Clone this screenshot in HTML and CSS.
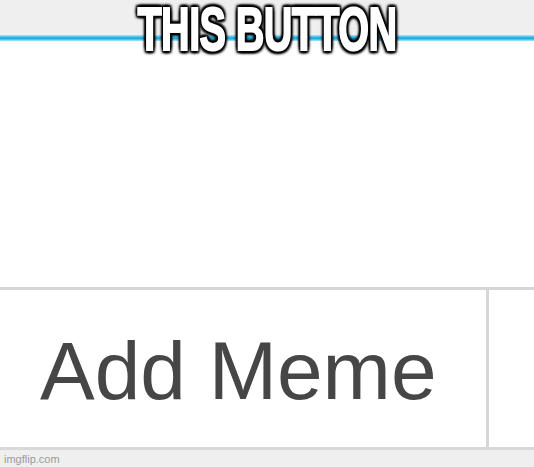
FILE: index.html
```html
<!DOCTYPE html>
<html>
<head>
<meta charset="utf-8">
<link rel="stylesheet" href="styles.css">
</head>
<body>
<div class="screen">
  <div class="topbar"></div>
  <div class="accent"></div>
  <div class="content"></div>
  <div class="buttons">
    <div class="btn"><span class="btn-label">Add Meme</span></div>
    <div class="btn-rest"></div>
  </div>
  <div class="footer"><span class="watermark">imgflip.com</span></div>
  <div class="caption">THIS BUTTON</div>
</div>
</body>
</html>
```
FILE: styles.css
```css
html, body {
  margin: 0;
  padding: 0;
  background: #ffffff;
}
.screen {
  position: relative;
  width: 534px;
  height: 467px;
  display: flex;
  flex-direction: column;
  overflow: hidden;
}
.topbar {
  height: 35px;
  background: #efefef;
}
.accent {
  height: 6px;
  background: linear-gradient(#b6e6f7, #29b6e8 40%, #1aaee4 60%, #b6e6f7);
}
.content {
  flex: 1;
  background: #ffffff;
}
.buttons {
  height: 157px;
  display: flex;
  border-top: 3px solid #d6d6d6;
}
.btn {
  width: 489px;
  border-right: 3px solid #d6d6d6;
  display: flex;
  align-items: center;
  padding-left: 40px;
  box-sizing: border-box;
}
.btn-label {
  font-family: "Liberation Sans", Arial, sans-serif;
  font-size: 82px;
  color: #464646;
  line-height: 1;
  margin-top: 4px;
}
.btn-rest {
  flex: 1;
}
.footer {
  height: 17px;
  border-top: 3px solid #d8d8d8;
  background: #efefef;
  display: flex;
  align-items: center;
  padding-left: 4px;
}
.watermark {
  font-family: "Liberation Sans", Arial, sans-serif;
  font-size: 11px;
  color: #9a9a9a;
}
.caption {
  position: absolute;
  top: 0;
  left: 0;
  width: 534px;
  text-align: center;
  font-family: "Liberation Sans Narrow", "Liberation Sans", sans-serif;
  font-weight: bold;
  font-size: 62px;
  line-height: 58px;
  color: #ffffff;
  transform: scaleX(0.64);
  letter-spacing: -1px;
  -webkit-text-stroke: 2px #ffffff;
  text-shadow:
    3px 3px 3px #000, -3px -3px 3px #000, 3px -3px 3px #000, -3px 3px 3px #000,
    0 3px 3px #000, 0 -3px 3px #000, 3px 0 3px #000, -3px 0 3px #000;
}
```
